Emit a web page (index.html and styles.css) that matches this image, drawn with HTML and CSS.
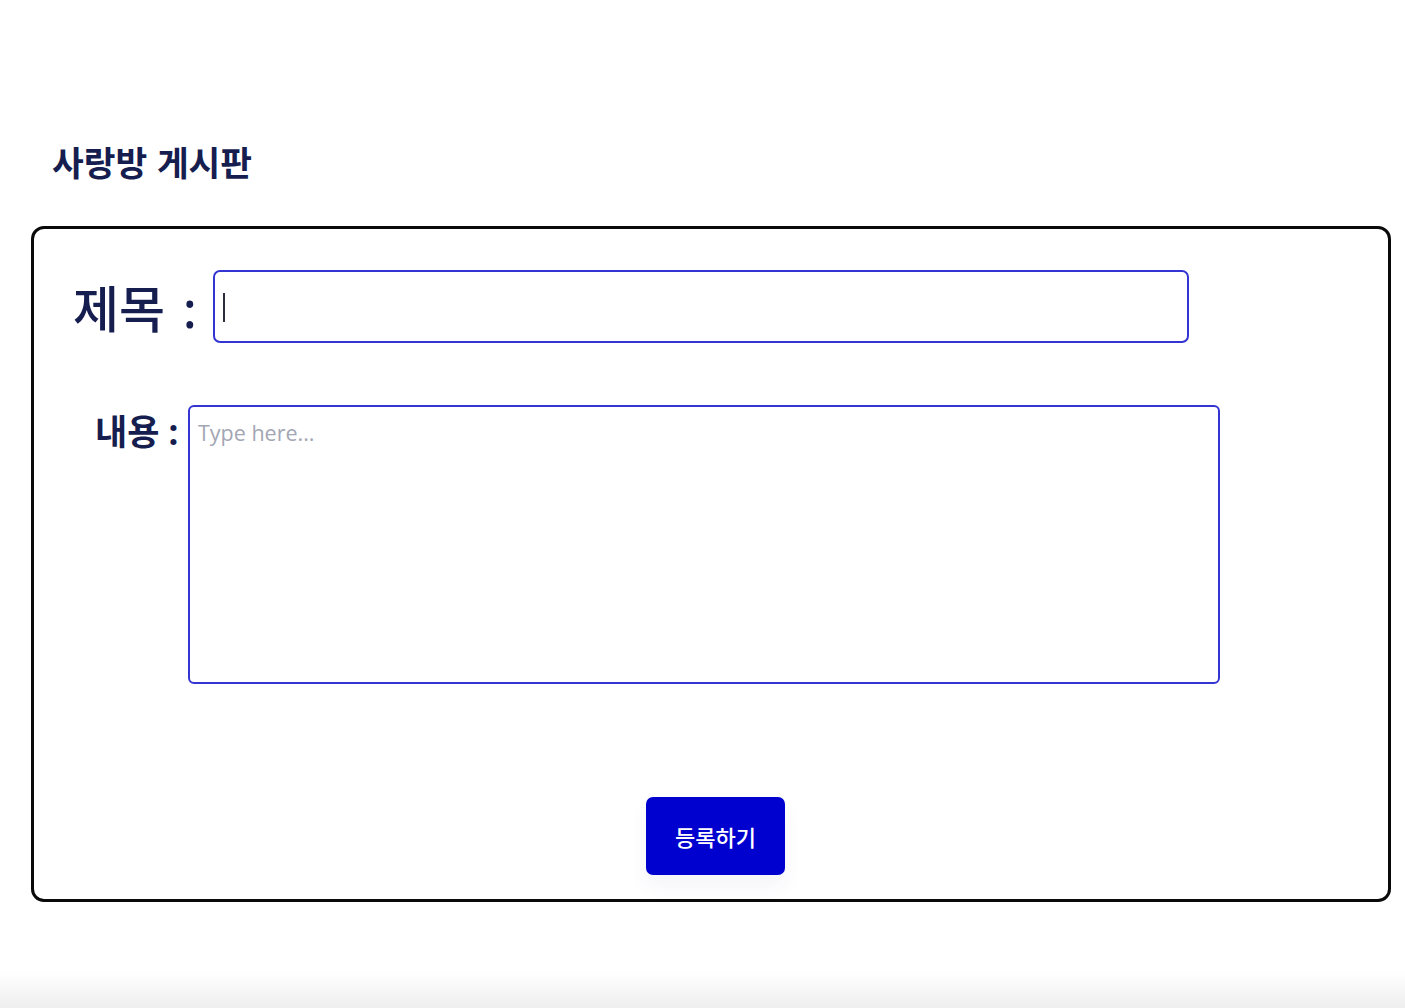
FILE: index.html
```html
<!DOCTYPE html>
<html lang="ko">
<head>
<meta charset="utf-8">
<title>사랑방 게시판</title>
<link rel="stylesheet" href="styles.css">
</head>
<body>
<main class="page">
  <h2 class="page-title">사랑방 게시판</h2>
  <form class="board-card">
    <div class="row row-title">
      <label class="label-title" for="title">제목 :</label>
      <div class="input-wrap">
        <input class="input-title" id="title" type="text">
        <span class="fake-caret"></span>
      </div>
    </div>
    <div class="row row-content">
      <label class="label-content" for="content">내용 :</label>
      <textarea class="input-content" id="content" placeholder="Type here..."></textarea>
    </div>
    <div class="row row-submit">
      <button class="submit-btn" type="button">등록하기</button>
    </div>
  </form>
</main>
</body>
</html>
```

FILE: styles.css
```css
html {
  min-height: 100%;
  background: linear-gradient(to bottom, #ffffff calc(100% - 36px), #eeeeee 100%);
}
body {
  margin: 0;
  font-family: "Noto Sans", "Noto Sans CJK KR", sans-serif;
  color: #161d4f;
}
.page {
  padding-top: 137px;
}
.page-title {
  margin: 0 0 0 52px;
  font-family: "Noto Sans CJK KR", sans-serif;
  font-size: 34.5px;
  font-weight: 700;
  line-height: 48px;
  color: #161d4f;
}
.board-card {
  margin: 41px 0 0 31px;
  width: 1360px;
  height: 676px;
  box-sizing: border-box;
  border: 3px solid #0a0a0a;
  border-radius: 13px;
  padding: 41px 0 0 0;
  background: #fff;
}
.row {
  display: flex;
}
.row-title {
  align-items: center;
  padding-left: 39px;
}
.label-title {
  font-family: "Noto Sans", "Noto Sans CJK KR", sans-serif;
  font-size: 50px;
  font-weight: 500;
  line-height: 60px;
  width: 140px;
  margin-top: 4px;
  word-spacing: 5px;
  white-space: nowrap;
}
.input-wrap {
  position: relative;
}
.input-title {
  display: block;
  width: 976px;
  height: 73px;
  box-sizing: border-box;
  border: 2px solid #3434d2;
  border-radius: 7px;
  padding: 0 10px;
  font-size: 30px;
  font-family: "Noto Sans CJK KR", sans-serif;
  color: #161d4f;
  outline: none;
  background: #fff;
}
.fake-caret {
  position: absolute;
  left: 10px;
  top: 23px;
  width: 1.5px;
  height: 29px;
  background: #2b2d3a;
}
.row-content {
  margin-top: 62px;
  padding-left: 61px;
  align-items: flex-start;
}
.label-content {
  font-family: "Noto Sans", "Noto Sans CJK KR", sans-serif;
  font-size: 35px;
  font-weight: 700;
  line-height: 50px;
  margin-top: 2px;
  width: 93px;
  white-space: nowrap;
}
.input-content {
  width: 1032px;
  height: 279px;
  box-sizing: border-box;
  border: 2px solid #3434d2;
  border-radius: 6px;
  padding: 11px 8px;
  font-family: "Open Sans", sans-serif;
  font-size: 21.5px;
  line-height: 30px;
  resize: none;
  outline: none;
  color: #161d4f;
  background: #fff;
}
.input-content::placeholder {
  color: #a3a6b4;
}
.row-submit {
  margin-top: 113px;
  padding-left: 612px;
}
.submit-btn {
  width: 139px;
  height: 78px;
  border: none;
  border-radius: 7px;
  background: #0000cf;
  color: #fff;
  font-family: "Noto Sans CJK KR", sans-serif;
  font-size: 22px;
  font-weight: 500;
  box-shadow: 0 12px 20px rgba(60, 60, 160, 0.05);
  cursor: pointer;
}
```
